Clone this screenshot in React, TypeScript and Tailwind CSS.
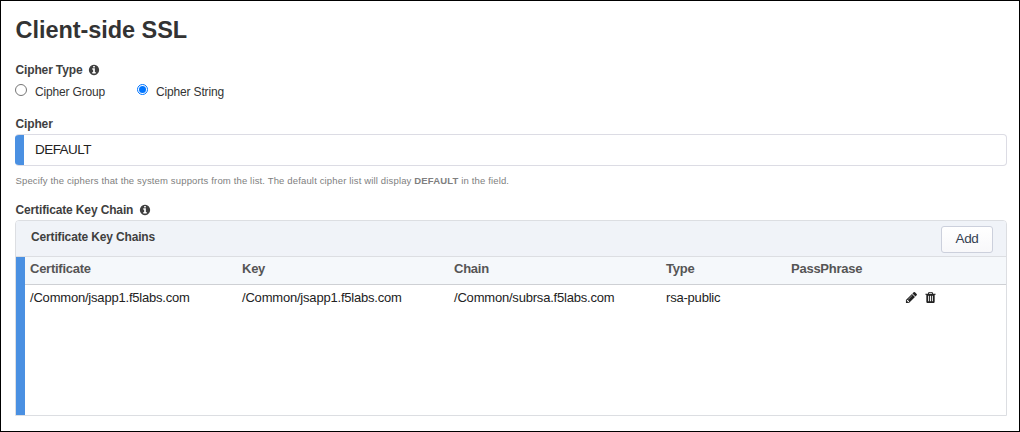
const INFO =
  'M1152 1376v-160q0-14-9-23t-23-9h-96v-512q0-14-9-23t-23-9h-320q-14 0-23 9t-9 23v160q0 14 9 23t23 9h96v320h-96q-14 0-23 9t-9 23v160q0 14 9 23t23 9h448q14 0 23-9t9-23zm-128-896v-160q0-14-9-23t-23-9h-192q-14 0-23 9t-9 23v160q0 14 9 23t23 9h192q14 0 23-9t9-23zm640 416q0 209-103 385.5t-279.5 279.5-385.5 103-385.5-103-279.5-279.5-103-385.5 103-385.5 279.5-279.5 385.5-103 385.5 103 279.5 279.5 103 385.5z';
const PENCIL =
  'M491 1536l91-91-235-235-91 91v107h128v128h107zm523-928q0-22-22-22-10 0-17 7l-542 542q-7 7-7 17 0 22 22 22 10 0 17-7l542-542q7-7 7-17zm-54-192l416 416-832 832h-416v-416zm683 96q0 53-37 90l-166 166-416-416 166-165q36-38 90-38 53 0 91 38l235 234q37 39 37 91z';
const TRASH =
  'M704 1376v-704q0-14-9-23t-23-9h-64q-14 0-23 9t-9 23v704q0 14 9 23t23 9h64q14 0 23-9t9-23zm256 0v-704q0-14-9-23t-23-9h-64q-14 0-23 9t-9 23v704q0 14 9 23t23 9h64q14 0 23-9t9-23zm256 0v-704q0-14-9-23t-23-9h-64q-14 0-23 9t-9 23v704q0 14 9 23t23 9h64q14 0 23-9t9-23zm-544-992h448l-48-117q-7-9-17-11h-317q-10 2-17 11zm928 32v64q0 14-9 23t-23 9h-96v948q0 83-47 143.5t-113 60.5h-832q-66 0-113-58.5t-47-141.5v-952h-96q-14 0-23-9t-9-23v-64q0-14 9-23t23-9h309l70-167q15-37 54-63t79-26h320q40 0 79 26t54 63l70 167h309q14 0 23 9t9 23z';

function Icon({ d, className }: { d: string; className: string }) {
  return (
    <svg viewBox="0 0 1792 1792" className={className} fill="currentColor" aria-hidden="true">
      <path d={d} />
    </svg>
  );
}

function Label({ text, info }: { text: string; info?: boolean }) {
  return (
    <div className="flex h-4 items-center gap-[6px] pl-[0.5px] text-xs leading-4 font-bold tracking-[-0.14px]">
      <span>{text}</span>
      {info && <Icon d={INFO} className="size-3" />}
    </div>
  );
}

const COLUMNS = 'grid grid-cols-[212px_212px_212px_125px_114px_1fr] pl-[5px] text-[13px]';

export default function App() {
  return (
    <main className="flex h-[432px] w-[1020px] flex-col border border-black bg-white pr-3 pl-[14px] font-['Liberation_Sans',Arial,sans-serif] text-[#3f3f3f]">
      <h1 className="mt-[13px] pl-[0.5px] text-[23.5px] leading-8 font-bold tracking-[-0.05px] text-[#333]">Client-side SSL</h1>

      <section className="mt-4">
        <Label text="Cipher Type" info />
        <div className="mt-0.5 flex h-5 text-xs tracking-[-0.16px] text-[#333]">
          <label className="flex w-[122px] gap-2">
            <span className="mt-1 size-3 rounded-full border border-[#767676]" />
            <span className="pt-1 leading-4">Cipher Group</span>
          </label>
          <label className="flex gap-2">
            <span className="mt-1 flex size-[11px] items-center justify-center rounded-full border border-[#0075ff]">
              <span className="size-[7px] rounded-full bg-[#0075ff]" />
            </span>
            <span className="pt-1 leading-4">Cipher String</span>
          </label>
        </div>
      </section>

      <section className="mt-4">
        <Label text="Cipher" />
        <div className="mt-[2px] flex h-8 w-[992px] overflow-hidden rounded border border-l-0 border-[#dcdce4]">
          <div className="-my-px w-[9px] bg-[#4a90e2]" />
          <div className="pl-[11px] text-[13.5px] leading-[29px] tracking-[-0.55px] text-[#222]">DEFAULT</div>
        </div>
        <p className="mt-2 pl-[0.5px] text-[9.5px] leading-[14px] tracking-[0.15px] text-[#808080]">
          Specify the ciphers that the system supports from the list. The default cipher list will display{' '}
          <b>DEFAULT</b> in the field.
        </p>
      </section>

      <section className="mt-[14px]">
        <Label text="Certificate Key Chain" info />
        <div className="mt-[2px] h-[196px] w-[992px] overflow-hidden rounded-t border border-[#dcdee2]">
          <header className="flex h-9 items-start justify-between border-b border-[#dcdee2] bg-[#f0f3f8] pr-[13px] pl-[15px]">
            <h2 className="pt-2 text-xs leading-4 font-bold tracking-[-0.15px]">Certificate Key Chains</h2>
            <button className="mt-[5px] h-[27px] w-[52px] rounded-[3px] border border-[#ccd0dc] bg-gradient-to-b from-white to-[#f8f8fa] pb-px text-[13.5px] leading-[24px] tracking-[-0.3px] text-[#354052]">
              Add
            </button>
          </header>
          <div className="flex h-[158px]">
            <div className="w-[9px] shrink-0 bg-[#4a90e2]" />
            <div className="flex-1">
              <div className={`${COLUMNS} h-7 border-b border-[#ced0d4] bg-[#f5f8fb] leading-6 font-bold tracking-[-0.25px] text-[#555]`}>
                <span>Certificate</span>
                <span>Key</span>
                <span>Chain</span>
                <span>Type</span>
                <span>PassPhrase</span>
              </div>
              <div className={`${COLUMNS} h-[26px] leading-[26px] tracking-[-0.2px] text-[#222]`}>
                <span>/Common/jsapp1.f5labs.com</span>
                <span>/Common/jsapp1.f5labs.com</span>
                <span>/Common/subrsa.f5labs.com</span>
                <span>rsa-public</span>
                <span />
                <span className="flex items-center gap-[6px] pb-[2px]">
                  <Icon d={PENCIL} className="size-[13px]" />
                  <Icon d={TRASH} className="size-[13px]" />
                </span>
              </div>
            </div>
          </div>
        </div>
      </section>
    </main>
  );
}
